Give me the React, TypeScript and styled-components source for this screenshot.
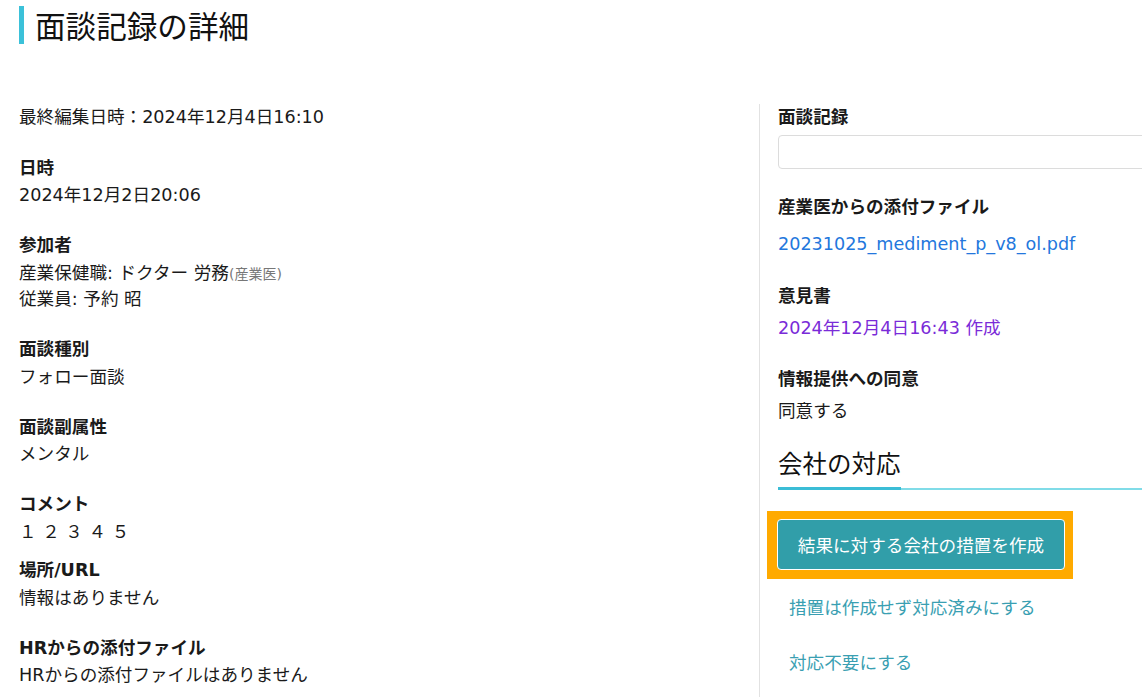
import React from "react";
import styled, { createGlobalStyle } from "styled-components";

const GlobalStyle = createGlobalStyle`
  html, body {
    margin: 0;
    padding: 0;
    background: #ffffff;
    overflow: hidden;
  }
  body {
    font-family: "DejaVu Sans", "Noto Sans CJK JP", sans-serif;
    font-size: 17.6px;
    line-height: 26.4px;
    color: #1a1a1a;
  }
`;

const Page = styled.div`
  width: 1142px;
  height: 697px;
  overflow: hidden;
  padding-left: 19px;
  box-sizing: border-box;
`;

const TitleBar = styled.h1`
  margin: 6px 0 0 0;
  height: 38px;
  display: flex;
  align-items: center;
  border-left: 5px solid #3bc1d9;
  padding-left: 11px;
  font-family: "Noto Sans CJK JP", sans-serif;
  font-weight: 400;
  font-size: 30.6px;
  line-height: 38px;
  color: #111;
`;

const Columns = styled.div`
  display: grid;
  grid-template-columns: 740px 420px;
  margin-top: 60px;
`;

const LeftCol = styled.div`
  display: flex;
  flex-direction: column;
`;

const RightCol = styled.div`
  border-left: 1px solid #e2e2e2;
  padding-left: 18px;
  display: flex;
  flex-direction: column;
  min-height: 600px;
`;

const Meta = styled.div`
  margin-bottom: 24.5px;
`;

const Group = styled.div<{ $gap?: number }>`
  margin-bottom: ${(p) => (p.$gap ?? 23.7)}px;
`;

const Label = styled.div`
  font-weight: 700;
  margin-bottom: 1px;
`;

const Value = styled.div<{ $space?: number }>`
  margin-top: ${(p) => p.$space ?? 0}px;
`;

const Sub = styled.span`
  font-size: 14px;
  line-height: 1;
  color: #777;
`;

const Spaced = styled.div`
  white-space: pre;
`;

const InputBox = styled.div`
  margin-top: 5px;
  height: 34px;
  border: 1px solid #dcdcdc;
  border-radius: 4px;
  box-sizing: border-box;
  margin-right: -20px;
`;

const FileLink = styled.a<{ $color: string }>`
  color: ${(p) => p.$color};
  text-decoration: none;
  cursor: pointer;
`;

const SectionHeading = styled.h2`
  margin: 22px 0 0 0;
  font-family: "Noto Sans CJK JP", sans-serif;
  font-weight: 400;
  font-size: 24.5px;
  line-height: 34px;
  color: #111;
  border-bottom: 2px solid #80dce8;
  margin-right: -20px;
  display: flex;
`;

const HeadingText = styled.span`
  display: inline-block;
  border-bottom: 3px solid #3bbdd6;
  margin-bottom: -2px;
  padding-bottom: 7px;
`;

const Highlight = styled.div`
  margin-top: 21px;
  margin-left: -11px;
  align-self: flex-start;
  background: #ffaa00;
  padding: 8px 8px 9px 10px;
`;

const PrimaryButton = styled.button`
  width: 288px;
  height: 51px;
  border: 1px solid #ffffff;
  border-radius: 4px;
  background: #319ea9;
  color: #ffffff;
  font-family: "Noto Sans CJK JP", sans-serif;
  font-size: 17.6px;
  display: flex;
  align-items: center;
  justify-content: center;
  cursor: pointer;
`;

const TextAction = styled.a<{ $top: number }>`
  display: block;
  margin-left: 11px;
  color: #3a9fb2;
  text-decoration: none;
  cursor: pointer;
  line-height: 26.4px;
  margin-top: ${(p) => p.$top}px;
`;

export default function App() {
  return (
    <>
      <GlobalStyle />
      <Page>
        <TitleBar>面談記録の詳細</TitleBar>
        <Columns>
          <LeftCol>
            <Meta>最終編集日時：2024年12月4日16:10</Meta>
            <Group>
              <Label>日時</Label>
              <Value>2024年12月2日20:06</Value>
            </Group>
            <Group>
              <Label>参加者</Label>
              <Value>
                産業保健職: ドクター 労務<Sub>(産業医)</Sub>
              </Value>
              <Value>従業員: 予約 昭</Value>
            </Group>
            <Group>
              <Label>面談種別</Label>
              <Value>フォロー面談</Value>
            </Group>
            <Group>
              <Label>面談副属性</Label>
              <Value>メンタル</Value>
            </Group>
            <Group $gap={12.2}>
              <Label>コメント</Label>
              <Spaced>１ ２ ３ ４ ５</Spaced>
            </Group>
            <Group>
              <Label>場所/URL</Label>
              <Value>情報はありません</Value>
            </Group>
            <Group>
              <Label>HRからの添付ファイル</Label>
              <Value>HRからの添付ファイルはありません</Value>
            </Group>
          </LeftCol>
          <RightCol>
            <Group $gap={25}>
              <Label>面談記録</Label>
              <InputBox />
            </Group>
            <Group $gap={26}>
              <Label>産業医からの添付ファイル</Label>
              <Value $space={10}>
                <FileLink $color="#2377dd">20231025_mediment_p_v8_ol.pdf</FileLink>
              </Value>
            </Group>
            <Group $gap={24.6}>
              <Label>意見書</Label>
              <Value $space={5}>
                <FileLink $color="#7a2bd8">2024年12月4日16:43 作成</FileLink>
              </Value>
            </Group>
            <Group $gap={0}>
              <Label>情報提供への同意</Label>
              <Value $space={6}>同意する</Value>
            </Group>
            <SectionHeading>
              <HeadingText>会社の対応</HeadingText>
            </SectionHeading>
            <Highlight>
              <PrimaryButton>結果に対する会社の措置を作成</PrimaryButton>
            </Highlight>
            <TextAction $top={16}>措置は作成せず対応済みにする</TextAction>
            <TextAction $top={28}>対応不要にする</TextAction>
          </RightCol>
        </Columns>
      </Page>
    </>
  );
}
